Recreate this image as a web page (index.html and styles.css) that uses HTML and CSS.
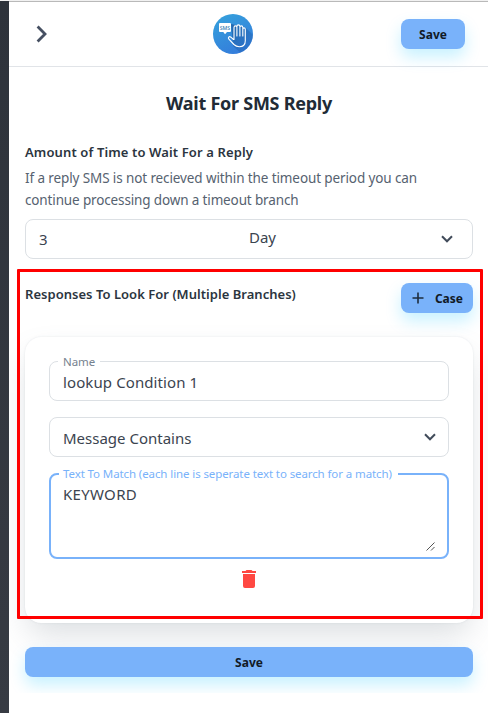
FILE: index.html
```html
<!DOCTYPE html>
<html lang="en">
<head>
<meta charset="utf-8">
<title>Wait For SMS Reply</title>
<link rel="stylesheet" href="styles.css">
</head>
<body>
<div class="app">
  <main class="drawer">
    <header class="header">
      <svg class="back" viewBox="0 0 24 24"><path d="M8.6 4.6 16 12l-7.400 7.400"/></svg>
      <svg class="logo" viewBox="0 0 40 40">
        <defs><linearGradient id="sky" x1="0.2" y1="0" x2="0.7" y2="1"><stop offset="0" stop-color="#35a0dc"/><stop offset="1" stop-color="#347bdb"/></linearGradient>
        <linearGradient id="shade" x1="0" y1="0" x2="1" y2="1"><stop offset="0" stop-color="#1d5ba0" stop-opacity=".8"/><stop offset="1" stop-color="#2465b5" stop-opacity=".1"/></linearGradient>
        <clipPath id="disc"><circle cx="20" cy="20" r="20"/></clipPath></defs>
        <circle cx="20" cy="20" r="20" fill="url(#sky)"/>
        <path clip-path="url(#disc)" d="m18 10 14 3 12 12-10 20-14-13z" fill="url(#shade)"/>
        <path d="M7 9h10q1 0 1 1v7q0 1-1 1h-3l-2 2.200L10.300 18H7q-1 0-1-1v-7q0-1 1-1z" fill="#fff"/>
        <text x="6.800" y="15.500" class="logo-text" textLength="10.400">SMS</text>
        <path class="hand" d="m20.500 25.500-2.600-2.300c-1.800-1.300-3.300.3-2 2l5 5.300c1.700 1.700 3.200 2.300 5.400 2.300 3.700 0 6-2.400 6-6V15.500c0-2.200-2.500-2.200-2.500 0V22v-8.500c0-2.200-2.900-2.200-2.900 0V22v-9.500c0-2.200-3-2.200-3 0V22v-8.500c0-2.200-2.900-2.200-2.900 0v12z"/>
      </svg>
      <button class="button">Save</button>
    </header>
    <section class="content">
      <h1 class="title">Wait For SMS Reply</h1>
      <h2 class="heading heading-time">Amount of Time to Wait For a Reply</h2>
      <p class="description">If a reply SMS is not recieved within the timeout period you can<br><span class="second-line">continue processing down a timeout branch</span></p>
      <div class="field duration">
        <span class="amount">3</span><span class="unit">Day</span>
        <svg class="chevron" viewBox="0 0 12 8"><path d="m1 1.300 5 5 5-5"/></svg>
      </div>
      <div class="responses-head">
        <h2 class="heading heading-responses">Responses To Look For (Multiple Branches)</h2>
        <button class="button case"><svg class="plus" viewBox="0 0 12 12"><path d="M6 .5v11M.5 6h11"/></svg><span>Case</span></button>
      </div>
      <div class="card">
        <div class="field name"><span class="label name-label">Name</span><span class="lookup">lookup Condition 1</span></div>
        <div class="field condition"><span class="contains">Message Contains</span><svg class="chevron" viewBox="0 0 12 8"><path d="m1 1.300 5 5 5-5"/></svg></div>
        <div class="field match">
          <span class="label match-label">Text To Match (each line is seperate text to search for a match)</span>
          <span class="keyword">KEYWORD</span>
          <svg class="grip" viewBox="0 0 9 9"><path d="m.5 8.500 8-8m-3.500 8 3.500-3.500"/></svg>
        </div>
        <svg class="trash" viewBox="0 0 14 18"><path d="M1 4h12v12q0 2-2 2H3q-2 0-2-2zM0 1h3.500l1-1h5l1 1H14v2H0z"/></svg>
      </div>
      <button class="button save-wide">Save</button>
    </section>
    <div class="highlight"></div>
  </main>
</div>
</body>
</html>
```
FILE: styles.css
```css
* { box-sizing: border-box; }
body {
  margin: 0;
  font-family: "Noto Sans", "Open Sans", sans-serif;
  color: #212b36;
}
.app {
  height: 713px;
  padding-left: 9px;
  border-top: 1px solid #f1f1f1;
  background: linear-gradient(#2e333b, #373b43);
  overflow: hidden;
}
.drawer {
  position: relative;
  height: 712px;
  background: #fff;
  border-top: 1px solid #b9b9b9;
}
.header {
  height: 65px;
  display: flex;
  align-items: center;
  justify-content: space-between;
  padding: 0 23px 0 20px;
  border-bottom: 1px solid #e1e4e8;
}
.back {
  width: 24px;
  height: 24px;
  fill: none;
  stroke: #465062;
  stroke-width: 2.8;
}
.logo { width: 40px; height: 40px; margin-left: 12px; }
.logo-text { font: 600 5.200px "Open Sans", sans-serif; fill: #397fb4; }
.hand { fill: none; stroke: #fff; stroke-width: 1.1; stroke-linejoin: round; }
.button {
  height: 30px;
  padding: 0;
  border: 0;
  border-radius: 8px;
  background: #79b2fa;
  box-shadow: 0 8px 16px rgba(0, 190, 255, .22);
  color: #111a26;
  font: 700 12px "Noto Sans", sans-serif;
}
.header .button { width: 64px; }
.content {
  height: 626px;
  padding: 23px 15px 0 16px;
  overflow: hidden;
}
.title {
  height: 26px;
  margin: 0;
  line-height: 26px;
  font-size: 18px;
  font-weight: 700;
  text-align: center;
  letter-spacing: -.26px;
}
.heading {
  margin: 0;
  font-size: 13px;
  line-height: 22px;
  font-weight: 600;
  white-space: nowrap;
  color: #2b3540;
}
.heading-time { margin-top: 25px; letter-spacing: .12px; }
.heading-responses { letter-spacing: .03px; }
.description {
  height: 44px;
  margin: 4px 0 8px;
  color: #566270;
  font-size: 13.5px;
  line-height: 22px;
  letter-spacing: -.11px;
  white-space: nowrap;
}
.second-line { letter-spacing: -.14px; }
.field {
  position: relative;
  height: 40px;
  display: flex;
  align-items: center;
  border: 1px solid #dce0e4;
  border-radius: 8px;
  padding: 0 13px;
  font-size: 15px;
  color: #3b4450;
}
.amount { width: 210px; }
.unit { padding-bottom: 4px; }
.lookup, .contains { padding-top: 2px; }
.lookup { letter-spacing: .1px; }
.keyword { letter-spacing: .3px; }
.chevron {
  width: 12px;
  height: 8px;
  margin-left: auto;
  fill: none;
  stroke: #414b5a;
  stroke-width: 2;
}
.duration .chevron { margin-right: 6px; }
.condition .chevron { margin-right: -1px; }
.responses-head {
  display: flex;
  justify-content: space-between;
  margin-top: 24px;
}
.case {
  width: 72px;
  display: flex;
  align-items: center;
  justify-content: flex-end;
  padding-right: 10px;
  gap: 11px;
}
.plus { width: 12px; height: 12px; fill: none; stroke: #1d2c3e; stroke-width: 1.6; }
.card {
  height: 286px;
  margin-top: 24px;
  padding: 24px;
  display: flex;
  flex-direction: column;
  border-radius: 16px;
  box-shadow: 0 0 2px rgba(145, 158, 171, .24), 0 16px 32px -4px rgba(110, 120, 135, .24);
}
.condition { margin-top: 16px; }
.match {
  height: 86px;
  margin-top: 16px;
  border: 2px solid #79b2fa;
  align-items: flex-start;
  padding: 9px 12px;
}
.label {
  position: absolute;
  top: -9px;
  left: 8px;
  height: 17px;
  padding: 0 5px;
  background: #fff;
  font-size: 11.5px;
  line-height: 17px;
  white-space: nowrap;
  color: #76828f;
}
.name-label { width: 42px; letter-spacing: -.1px; }
.match-label {
  width: 339px;
  padding-left: 4px;
  color: #79b2fa;
  top: -10px;
  letter-spacing: -.1px;
}
.grip {
  position: absolute;
  right: 12px;
  bottom: 6px;
  width: 9px;
  height: 9px;
  fill: none;
  stroke: #555;
  stroke-width: 1;
}
.trash { width: 14px; height: 18px; margin: 11px auto 0; fill: #ff4842; }
.save-wide { display: block; width: 448px; margin-top: 24px; }
.highlight {
  position: absolute;
  left: 8px;
  top: 267px;
  width: 466px;
  height: 350px;
  border: 3px solid #f00;
  border-radius: 1px;
}
```
